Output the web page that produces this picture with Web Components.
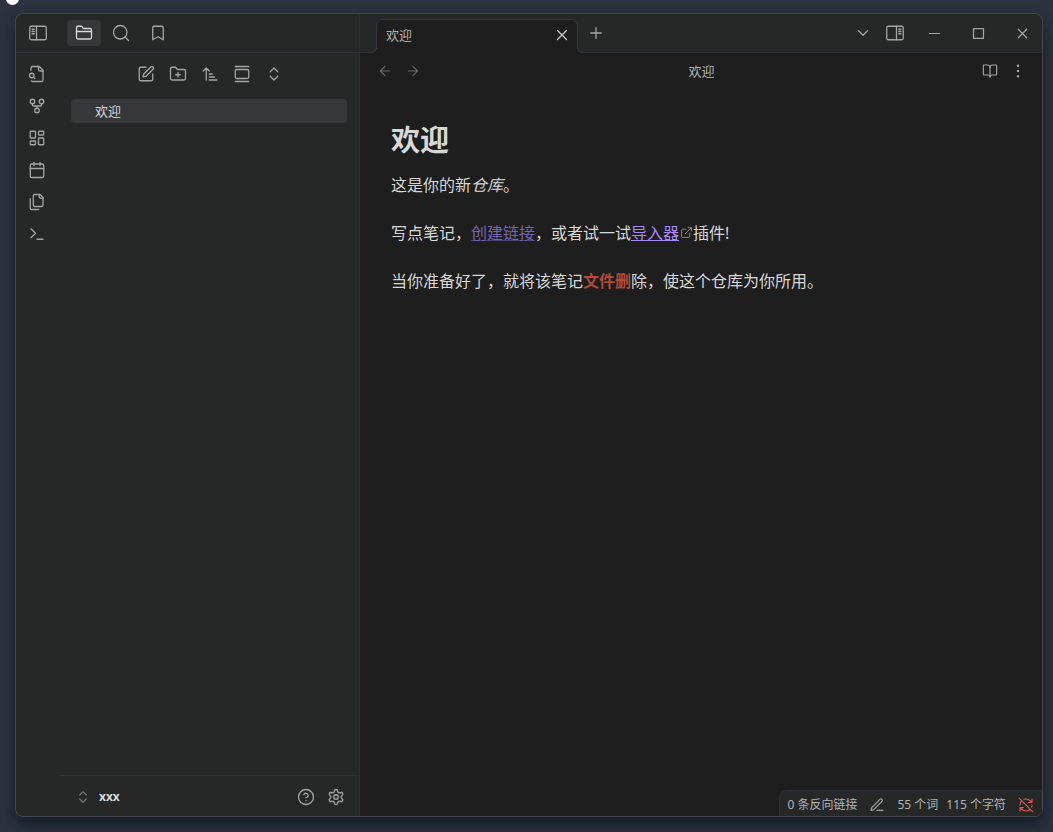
<!DOCTYPE html>
<html lang="zh-CN">
<head>
<meta charset="UTF-8">
<meta name="viewport" content="width=device-width, initial-scale=1.0">
<title>欢迎</title>
<style>
  :root {
    --side: #252827;
    --main: #1e1e1e;
    --hover: #363739;
    --line: #2c2e38;
    --frame: #45474d;
    --text: #d8d8d8;
    --muted: #b3b3b3;
    --icon: #a3a5a3;
    --faint: #666666;
    --accent: #a68af9;
    --red: #b4493a;
  }
  * {
    box-sizing: border-box;
  }
  body {
    display: flex;
    min-height: 100vh;
    margin: 0;
    padding: 13px 10px 15px 15px;
    background: #2c3240;
    color: var(--text);
    font-family: "Noto Sans", "Noto Sans CJK SC", sans-serif;
    font-size: 13px;
    line-height: 18px;
    overflow: hidden;
  }
</style>
</head>
<body>
  <app-window>
    <side-dock slot="side"></side-dock>
    <tab-bar slot="tabs">欢迎</tab-bar>
    <note-view slot="view">
      <span slot="title">欢迎</span>
      <note-document></note-document>
    </note-view>
    <status-bar slot="status"></status-bar>
  </app-window>

<script>
const ICONS = {
  sidebarLeft: `<rect x="1" y="3" width="22" height="18" rx="2"/><path d="M10 3v18M4 7h3M4 10h3M4 13h3"/>`,
  sidebarRight: `<rect x="1" y="3" width="22" height="18" rx="2"/><path d="M14 3v18M17 7h3M17 10h3M17 13h3"/>`,
  folder: `<path d="M20 20a2 2 0 0 0 2-2V8a2 2 0 0 0-2-2h-7.9a2 2 0 0 1-1.69-.9L9.6 3.9A2 2 0 0 0 7.93 3H4a2 2 0 0 0-2 2v13a2 2 0 0 0 2 2Z"/><path d="M2 10h20"/>`,
  search: `<circle cx="11" cy="11" r="9"/><path d="m22 22-4.6-4.6"/>`,
  bookmark: `<path d="m19 21-7-4-7 4V5a2 2 0 0 1 2-2h10a2 2 0 0 1 2 2z"/>`,
  fileSearch: `<path d="M14 2v4a2 2 0 0 0 2 2h4"/><path d="M4.268 21a2 2 0 0 0 1.727 1H18a2 2 0 0 0 2-2V7l-5-5H6a2 2 0 0 0-2 2v3"/><path d="m9 18-1.5-1.5"/><circle cx="5" cy="14" r="3"/>`,
  fork: `<circle cx="12" cy="18" r="3"/><circle cx="6" cy="6" r="3"/><circle cx="18" cy="6" r="3"/><path d="M18 9v2c0 .6-.4 1-1 1H7c-.6 0-1-.4-1-1V9M12 12v3"/>`,
  dashboard: `<rect x="3" y="3" width="7" height="9" rx="1"/><rect x="14" y="3" width="7" height="5" rx="1"/><rect x="14" y="12" width="7" height="9" rx="1"/><rect x="3" y="16" width="7" height="5" rx="1"/>`,
  calendar: `<path d="M8 2v4M16 2v4M3 10h18"/><rect x="3" y="4" width="18" height="18" rx="2"/>`,
  files: `<path d="M20 7h-3a2 2 0 0 1-2-2V2"/><path d="M9 18a2 2 0 0 1-2-2V4a2 2 0 0 1 2-2h7l4 4v10a2 2 0 0 1-2 2Z"/><path d="M3 7.6v12.8A1.6 1.6 0 0 0 4.6 22h9.8"/>`,
  terminal: `<path d="m4 17 6-6-6-6M12 19h8"/>`,
  edit: `<path d="M12 3H5a2 2 0 0 0-2 2v14a2 2 0 0 0 2 2h14a2 2 0 0 0 2-2v-7"/><path d="M18.375 2.625a1 1 0 0 1 3 3l-9.013 9.014a2 2 0 0 1-.853.505l-2.873.84a.5.5 0 0 1-.62-.62l.84-2.873a2 2 0 0 1 .506-.852z"/>`,
  folderPlus: `<path d="M20 20a2 2 0 0 0 2-2V8a2 2 0 0 0-2-2h-7.9a2 2 0 0 1-1.69-.9L9.6 3.9A2 2 0 0 0 7.93 3H4a2 2 0 0 0-2 2v13a2 2 0 0 0 2 2Z"/><path d="M12 10v6M9 13h6"/>`,
  sort: `<path d="m3 8 4-4 4 4M7 4v16M11 12h4M11 16h7M11 20h10"/>`,
  gallery: `<path d="M3 2h18M3 22h18"/><rect x="3" y="6" width="18" height="12" rx="2"/>`,
  upDown: `<path d="m7 15 5 5 5-5M7 9l5-5 5 5"/>`,
  help: `<circle cx="12" cy="12" r="10"/><path d="M9.09 9a3 3 0 0 1 5.83 1c0 2-3 3-3 3M12 17h.01"/>`,
  settings: `<path d="M12.22 2h-.44a2 2 0 0 0-2 2v.18a2 2 0 0 1-1 1.73l-.43.25a2 2 0 0 1-2 0l-.15-.08a2 2 0 0 0-2.73.73l-.22.38a2 2 0 0 0 .73 2.73l.15.1a2 2 0 0 1 1 1.72v.51a2 2 0 0 1-1 1.74l-.15.09a2 2 0 0 0-.73 2.73l.22.38a2 2 0 0 0 2.73.73l.15-.08a2 2 0 0 1 2 0l.43.25a2 2 0 0 1 1 1.73V20a2 2 0 0 0 2 2h.44a2 2 0 0 0 2-2v-.18a2 2 0 0 1 1-1.73l.43-.25a2 2 0 0 1 2 0l.15.08a2 2 0 0 0 2.73-.73l.22-.39a2 2 0 0 0-.73-2.73l-.15-.08a2 2 0 0 1-1-1.74v-.5a2 2 0 0 1 1-1.74l.15-.09a2 2 0 0 0 .73-2.73l-.22-.38a2 2 0 0 0-2.73-.73l-.15.08a2 2 0 0 1-2 0l-.43-.25a2 2 0 0 1-1-1.73V4a2 2 0 0 0-2-2z"/><circle cx="12" cy="12" r="3"/>`,
  close: `<path d="M18 6 6 18M6 6l12 12"/>`,
  plus: `<path d="M5 12h14M12 5v14"/>`,
  chevron: `<path d="m6 9 6 6 6-6"/>`,
  minimize: `<path d="M5 12h14"/>`,
  maximize: `<rect x="5" y="5" width="14" height="14"/>`,
  back: `<path d="m12 19-7-7 7-7M19 12H5"/>`,
  forward: `<path d="M5 12h14M12 5l7 7-7 7"/>`,
  book: `<path d="M12 7v14"/><path d="M3 18a1 1 0 0 1-1-1V4a1 1 0 0 1 1-1h5a4 4 0 0 1 4 4 4 4 0 0 1 4-4h5a1 1 0 0 1 1 1v13a1 1 0 0 1-1 1h-6a3 3 0 0 0-3 3 3 3 0 0 0-3-3z"/>`,
  more: `<g fill="currentColor"><circle cx="12" cy="12" r="1"/><circle cx="12" cy="4" r="1"/><circle cx="12" cy="20" r="1"/></g>`,
  external: `<path d="M15 3h6v6M10 14 21 3M18 13v6a2 2 0 0 1-2 2H5a2 2 0 0 1-2-2V8a2 2 0 0 1 2-2h6"/>`,
  pen: `<path d="M12 20h9"/><path d="M16.376 3.622a1 1 0 0 1 3.002 3.002L7.368 18.635a2 2 0 0 1-.855.506l-2.872.838a.5.5 0 0 1-.62-.62l.838-2.872a2 2 0 0 1 .506-.854z"/>`,
  syncOff: `<path d="M21 8l-2.260-2.260A9.750 9.750 0 0 0 12 3c-1 0-1.970.160-2.870.470M8 16H3v5M3 12c0-2.490 1-4.740 2.640-6.360M3 16l2.260 2.260A9.750 9.750 0 0 0 12 21c2.490 0 4.740-1 6.360-2.640M21 12c0 1-.160 1.970-.470 2.870M21 3v5h-5M22 22 2 2"/>`,
};

class BaseElement extends HTMLElement {
  constructor() {
    super();
    this.attachShadow({ mode: "open" });
  }

  connectedCallback() {
    this.shadowRoot.innerHTML = `<style>* { box-sizing: border-box; } ${this.styles()}</style>${this.render()}`;
  }
}

class UiIcon extends BaseElement {
  render() {
    const size = this.getAttribute("size") || 18;
    return /*html*/ `
      <svg width="${size}" height="${size}" viewBox="0 0 24 24" fill="none" stroke="currentColor"
        stroke-width="1.75" stroke-linecap="round" stroke-linejoin="round" aria-hidden="true">${ICONS[this.getAttribute("name")]}</svg>
    `;
  }

  styles() {
    return /*css*/ `
      :host { display: inline-flex; }
      svg { display: block; }
    `;
  }
}

class IconButton extends BaseElement {
  render() {
    return /*html*/ `
      <button type="button" aria-label="${this.getAttribute("label")}">
        <ui-icon name="${this.getAttribute("icon")}" size="${this.getAttribute("size") || 18}"></ui-icon>
      </button>
    `;
  }

  styles() {
    return /*css*/ `
      :host {
        display: flex;
        flex: none;
        width: var(--button-width, 32px);
        height: var(--button-height, 32px);
        color: var(--icon);
      }
      :host([active]) button {
        background: var(--hover);
        color: var(--text);
      }
      button {
        display: flex;
        flex: 1;
        align-items: center;
        justify-content: center;
        padding: 0;
        border: none;
        border-radius: 4px;
        background: none;
        color: inherit;
        cursor: pointer;
      }
    `;
  }
}

class AppWindow extends BaseElement {
  render() {
    return /*html*/ `
      <div class="blob"></div>
      <div class="window">
        <slot name="side"></slot>
        <main class="window__main">
          <slot name="tabs"></slot>
          <slot name="view"></slot>
        </main>
        <slot name="status"></slot>
      </div>
    `;
  }

  styles() {
    return /*css*/ `
      :host {
        display: flex;
        flex: 1;
      }
      .blob {
        position: absolute;
        top: -8px;
        left: 6px;
        width: 13px;
        height: 13px;
        border-radius: 50%;
        background: #fff;
      }
      .window {
        position: relative;
        display: flex;
        flex: 1;
        border: 1px solid var(--frame);
        border-radius: 8px;
        background: var(--side);
        box-shadow: 0 8px 14px rgba(8, 14, 24, 0.6);
        overflow: hidden;
      }
      .window__main {
        display: flex;
        flex: 1;
        flex-direction: column;
        min-width: 0;
      }
    `;
  }
}

class SideDock extends BaseElement {
  render() {
    return /*html*/ `
      <header class="dock__header">
        <icon-button class="dock__toggle" icon="sidebarLeft" label="折叠侧边栏"></icon-button>
        <nav class="dock__tabs">
          <icon-button icon="folder" label="文件列表" active></icon-button>
          <icon-button icon="search" label="搜索"></icon-button>
          <icon-button icon="bookmark" label="书签"></icon-button>
        </nav>
      </header>
      <div class="dock__body">
        <nav class="dock__ribbon">
          <icon-button icon="fileSearch" label="快速切换"></icon-button>
          <icon-button icon="fork" label="关系图谱"></icon-button>
          <icon-button icon="dashboard" label="白板"></icon-button>
          <icon-button icon="calendar" label="日记"></icon-button>
          <icon-button icon="files" label="模板"></icon-button>
          <icon-button icon="terminal" label="命令面板"></icon-button>
        </nav>
        <file-explorer></file-explorer>
      </div>
    `;
  }

  styles() {
    return /*css*/ `
      :host {
        display: flex;
        flex: none;
        flex-direction: column;
        width: 344px;
        border-right: 1px solid var(--line);
      }
      .dock__header {
        display: flex;
        align-items: center;
        gap: 8px;
        height: 39px;
        border-bottom: 1px solid #33303b;
      }
      .dock__toggle {
        --button-width: 43px;
      }
      .dock__tabs {
        display: flex;
        gap: 3px;
        --button-width: 34px;
        --button-height: 26px;
      }
      .dock__body {
        display: flex;
        flex: 1;
      }
      .dock__ribbon {
        display: flex;
        flex-direction: column;
        width: 43px;
        padding-top: 5px;
        --button-width: 42px;
      }
      file-explorer {
        flex: 1;
      }
    `;
  }
}

class FileExplorer extends BaseElement {
  render() {
    return /*html*/ `
      <div class="explorer__actions">
        <icon-button icon="edit" label="新建笔记"></icon-button>
        <icon-button icon="folderPlus" label="新建文件夹"></icon-button>
        <icon-button icon="sort" label="排序"></icon-button>
        <icon-button icon="gallery" label="自动定位"></icon-button>
        <icon-button icon="upDown" label="全部展开"></icon-button>
      </div>
      <div class="explorer__files">
        <a class="explorer__file" href="#welcome">欢迎</a>
      </div>
      <footer class="explorer__footer">
        <button class="explorer__vault" type="button">
          <ui-icon name="upDown" size="16"></ui-icon>xxx
        </button>
        <icon-button icon="help" label="帮助"></icon-button>
        <icon-button icon="settings" label="设置"></icon-button>
      </footer>
    `;
  }

  styles() {
    return /*css*/ `
      :host {
        display: flex;
        flex-direction: column;
      }
      .explorer__actions {
        display: flex;
        justify-content: center;
        padding: 5px 0 0 2px;
      }
      .explorer__files {
        flex: 1;
        padding: 9px 12px;
      }
      .explorer__file {
        display: block;
        padding: 0 24px;
        border-radius: 4px;
        background: var(--hover);
        color: var(--text);
        line-height: 24px;
        text-decoration: none;
      }
      .explorer__footer {
        display: flex;
        align-items: center;
        height: 41px;
        padding: 2px 8px 0 16px;
        border-top: 1px solid #30303b;
        --button-width: 30px;
      }
      .explorer__vault {
        display: flex;
        flex: 1;
        align-items: center;
        gap: 8px;
        padding: 0;
        border: none;
        background: none;
        color: var(--text);
        font: inherit;
        font-size: 12px;
        font-weight: 700;
        cursor: pointer;
      }
      .explorer__vault ui-icon {
        color: #7b7d7b;
      }
    `;
  }
}

class TabBar extends BaseElement {
  render() {
    return /*html*/ `
      <div class="tab">
        <span class="tab__name"><slot></slot></span>
        <icon-button class="tab__close" icon="close" label="关闭标签页"></icon-button>
      </div>
      <icon-button class="bar__new" icon="plus" label="新标签页"></icon-button>
      <div class="bar__tools">
        <icon-button icon="chevron" label="标签页列表"></icon-button>
        <icon-button icon="sidebarRight" label="展开侧边栏"></icon-button>
      </div>
      <div class="bar__controls">
        <icon-button icon="minimize" size="17" label="最小化"></icon-button>
        <icon-button icon="maximize" size="17" label="最大化"></icon-button>
        <icon-button icon="close" size="17" label="关闭"></icon-button>
      </div>
    `;
  }

  styles() {
    return /*css*/ `
      :host {
        display: flex;
        flex: none;
        align-items: center;
        height: 39px;
        padding: 0 8px 0 16px;
        border-bottom: 1px solid var(--line);
      }
      .tab {
        position: relative;
        display: flex;
        align-items: center;
        align-self: flex-end;
        width: 202px;
        height: 34px;
        margin-bottom: -1px;
        padding: 0 8px 4px 9px;
        border: 1px solid #343640;
        border-bottom: none;
        border-radius: 7px 7px 0 0;
        background: var(--main);
        color: var(--muted);
      }
      /* flared feet where the tab meets the line */
      .tab::before,
      .tab::after {
        content: "";
        position: absolute;
        bottom: 0;
        width: 6px;
        height: 6px;
      }
      .tab::before {
        right: 100%;
        background: radial-gradient(circle at 0 0, transparent 5px, #343640 5px, #343640 6px, var(--main) 6px);
      }
      .tab::after {
        left: 100%;
        background: radial-gradient(circle at 100% 0, transparent 5px, #343640 5px, #343640 6px, var(--main) 6px);
      }
      .tab__name {
        flex: 1;
      }
      .tab__close {
        --button-width: 16px;
        --button-height: 16px;
        color: #c8c8c8;
      }
      .bar__new {
        --button-width: 36px;
      }
      .bar__tools {
        display: flex;
        margin-left: auto;
      }
      .bar__controls {
        display: flex;
        gap: 20px;
        margin-left: 11px;
        --button-width: 24px;
      }
    `;
  }
}

class NoteView extends BaseElement {
  render() {
    return /*html*/ `
      <header class="view__header">
        <div class="view__nav">
          <icon-button icon="back" label="后退" size="16"></icon-button>
          <icon-button icon="forward" label="前进" size="16"></icon-button>
        </div>
        <div class="view__title"><slot name="title"></slot></div>
        <div class="view__actions">
          <icon-button icon="book" label="阅读视图" size="16"></icon-button>
          <icon-button icon="more" label="更多选项" size="16"></icon-button>
        </div>
      </header>
      <slot></slot>
    `;
  }

  styles() {
    return /*css*/ `
      :host {
        display: flex;
        flex: 1;
        flex-direction: column;
        background: var(--main);
      }
      .view__header {
        display: flex;
        align-items: center;
        height: 36px;
        padding: 0 10px 0 11px;
        --button-width: 28px;
      }
      .view__nav,
      .view__actions {
        display: flex;
      }
      .view__nav icon-button {
        color: var(--faint);
      }
      .view__title {
        flex: 1;
        color: var(--muted);
        text-align: center;
      }
    `;
  }
}

class NoteDocument extends BaseElement {
  render() {
    return /*html*/ `
      <article>
        <h1>欢迎</h1>
        <p>这是你的新<em>仓库</em>。</p>
        <p>写点笔记，<a class="unresolved" href="#link">创建链接</a>，或者试一试<a href="#importer">导入器</a><ui-icon name="external" size="13"></ui-icon>插件!</p>
        <p>当你准备好了，就将该笔记<strong>文件删</strong>除，使这个仓库为你所用。</p>
      </article>
    `;
  }

  styles() {
    return /*css*/ `
      :host {
        display: block;
        padding: 33px 31px;
        font-size: 16px;
        line-height: 24px;
      }
      h1 {
        margin: 0 0 16px;
        font-size: 29px;
        line-height: 35px;
      }
      p {
        margin: 0 0 24px;
      }
      a {
        color: var(--accent);
      }
      .unresolved {
        color: #7761b0;
        text-decoration-color: #4a4070;
      }
      strong {
        color: var(--red);
      }
      ui-icon {
        margin-left: 1px;
        color: #8a8a8a;
      }
    `;
  }
}

class StatusBar extends BaseElement {
  render() {
    return /*html*/ `
      <span>0 条反向链接</span>
      <icon-button icon="pen" label="编辑模式" size="16"></icon-button>
      <span>55 个词</span>
      <span>115 个字符</span>
      <icon-button class="sync" icon="syncOff" label="同步已断开" size="16"></icon-button>
    `;
  }

  styles() {
    return /*css*/ `
      :host {
        position: absolute;
        right: 0;
        bottom: 0;
        display: flex;
        align-items: center;
        gap: 8px;
        height: 26px;
        padding: 3px 4px 0 7px;
        border: 1px solid var(--line);
        border-width: 1px 0 0 1px;
        border-radius: 8px 0 0 0;
        background: var(--side);
        color: var(--muted);
        font-size: 12px;
        --button-width: 24px;
        --button-height: 20px;
      }
      .sync {
        color: #e5544b;
      }
    `;
  }
}

customElements.define("ui-icon", UiIcon);
customElements.define("icon-button", IconButton);
customElements.define("app-window", AppWindow);
customElements.define("side-dock", SideDock);
customElements.define("file-explorer", FileExplorer);
customElements.define("tab-bar", TabBar);
customElements.define("note-view", NoteView);
customElements.define("note-document", NoteDocument);
customElements.define("status-bar", StatusBar);
</script>
</body>
</html>
